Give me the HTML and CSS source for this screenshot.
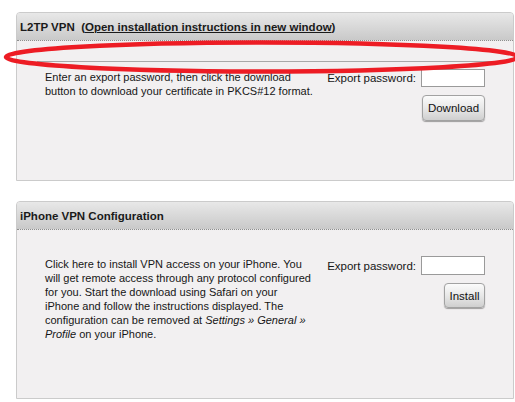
FILE: index.html
```html
<!DOCTYPE html>
<html>
<head>
<meta charset="utf-8">
<link rel="stylesheet" href="styles.css">
</head>
<body>
<div class="page">
  <div class="panel panel-l2tp">
    <div class="panel-head"><b>L2TP VPN</b>&nbsp;&nbsp;(<a href="#" class="link">Open installation instructions in new window</a>)</div>
    <div class="panel-body">
      <div class="rule"></div>
      <div class="row">
        <div class="desc">Enter an export password, then click the download<br>button to download your certificate in PKCS#12 format.</div>
        <div class="side">
          <div class="field"><span class="label">Export password:</span><input class="pw" type="text"></div>
          <button class="btn btn-download">Download</button>
        </div>
      </div>
    </div>
  </div>

  <div class="panel panel-iphone">
    <div class="panel-head"><b>iPhone VPN Configuration</b></div>
    <div class="panel-body body-iphone">
      <div class="row">
        <div class="desc">Click here to install VPN access on your iPhone. You<br>will get remote access through any protocol configured<br>for you. Start the download using Safari on your<br>iPhone and follow the instructions displayed. The<br>configuration can be removed at <i>Settings » General »<br>Profile</i> on your iPhone.</div>
        <div class="side side-iphone">
          <div class="field"><span class="label">Export password:</span><input class="pw" type="text"></div>
          <button class="btn btn-install">Install</button>
        </div>
      </div>
    </div>
  </div>
</div>
<svg class="mark" width="515" height="402" viewBox="0 0 515 402">
  <ellipse cx="262" cy="57" rx="256" ry="14.5" fill="none" stroke="#ed1c24" stroke-width="4.5"/>
</svg>
</body>
</html>
```

FILE: styles.css
```css
html, body {
  margin: 0;
  padding: 0;
  background: #ffffff;
}
body {
  font-family: "Liberation Sans", Arial, sans-serif;
  font-size: 11px;
  color: #161616;
  width: 515px;
  height: 402px;
  overflow: hidden;
  position: relative;
}
.page {
  padding: 12px 0 0 16px;
  display: flex;
  flex-direction: column;
  gap: 20px;
}
.panel {
  width: 498px;
  box-sizing: border-box;
  border: 1px solid #cbcbcb;
  border-radius: 4px 4px 0 0;
  background: #f2f0f1;
  display: flex;
  flex-direction: column;
}
.panel-l2tp { height: 169px; }
.panel-iphone { height: 198px; }
.panel-head {
  height: 28px;
  box-sizing: border-box;
  padding: 7px 0 0 3px;
  line-height: 14px;
  font-size: 11.5px;
  font-weight: bold;
  white-space: nowrap;
  background: linear-gradient(#e8e8e8, #c9c9c9);
  border-bottom: 1px dotted #8e8e8e;
  border-radius: 3px 3px 0 0;
  color: #1a1a1a;
}
.link {
  color: #1a1a1a;
  text-decoration: underline;
}
.panel-body {
  padding: 20px 0 0 0;
}
.rule {
  height: 1px;
  background: #a8a8a8;
  margin: 0 20px 0 20px;
}
.row {
  display: flex;
  padding: 7px 28px 0 28px;
}
.body-iphone {
  padding-top: 26px;
}
.body-iphone .row { padding-top: 0; }
.desc {
  flex: none;
  width: 275px;
  white-space: nowrap;
  line-height: 14px;
  padding-top: 1px;
}
.side {
  margin-left: auto;
  display: flex;
  flex-direction: column;
  align-items: flex-end;
}
.field {
  display: flex;
  align-items: center;
  gap: 5px;
  white-space: nowrap;
  font-size: 11.5px;
}
.pw {
  width: 64px;
  height: 18px;
  box-sizing: border-box;
  border: 1px solid #9a9a9a;
  background: #fff;
  margin: 0;
  padding: 0;
}
.side-iphone .pw { height: 19px; }
.btn {
  font-family: "Liberation Sans", Arial, sans-serif;
  font-size: 11.5px;
  color: #111;
  height: 26px;
  margin-top: 8px;
  padding: 0;
  border: 1px solid #a2a2a2;
  border-radius: 4px;
  background: linear-gradient(#fbfbfb, #e8e8e8 50%, #cfcfcf);
  box-shadow: 0 1px 1px rgba(0,0,0,0.35);
}
.btn-download { width: 63px; }
.btn-install { width: 41px; height: 25px; }
.mark {
  position: absolute;
  top: 0;
  left: 0;
  pointer-events: none;
}
```
